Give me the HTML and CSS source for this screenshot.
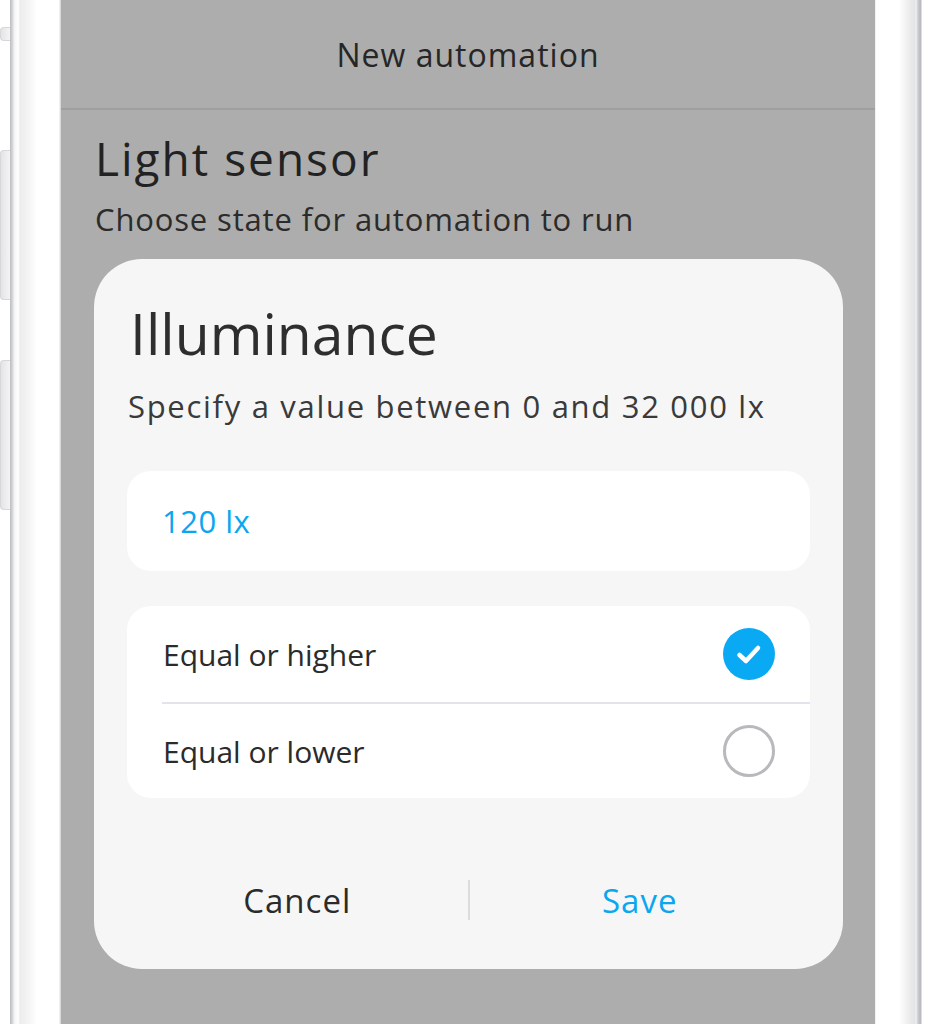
FILE: index.html
```html
<!DOCTYPE html>
<html lang="en">
<head>
<meta charset="utf-8">
<title>New automation</title>
<link rel="stylesheet" href="styles.css">
</head>
<body>
<div class="device">
  <div class="side-buttons">
    <span class="side-btn btn-a"></span>
    <span class="side-btn btn-b"></span>
    <span class="side-btn btn-c"></span>
  </div>
  <div class="bezel bezel-left"></div>
  <main class="screen">
    <header class="topbar">New automation</header>
    <section class="page-head">
      <h1 class="page-title">Light sensor</h1>
      <p class="page-sub">Choose state for automation to run</p>
    </section>
    <div class="dialog">
      <h2 class="dialog-title">Illuminance</h2>
      <p class="dialog-sub">Specify a value between 0 and 32&nbsp;000 lx</p>
      <div class="input-box">120 lx</div>
      <div class="options">
        <div class="option">
          <span class="option-label">Equal or higher</span>
          <span class="radio radio-on">
            <svg width="52" height="52" viewBox="0 0 52 52"><circle cx="26" cy="26" r="26" fill="#0aa9f4"/><path d="M16.5 27 L23 33 L35 20" fill="none" stroke="#fff" stroke-width="4.5" stroke-linecap="round" stroke-linejoin="round"/></svg>
          </span>
        </div>
        <div class="option">
          <span class="option-label">Equal or lower</span>
          <span class="radio radio-off"></span>
        </div>
      </div>
      <div class="actions">
        <span class="action action-cancel">Cancel</span>
        <span class="action-sep"></span>
        <span class="action action-save">Save</span>
      </div>
    </div>
  </main>
  <div class="bezel bezel-right"></div>
</div>
</body>
</html>
```
FILE: styles.css
```css
* { box-sizing: border-box; }
html, body { margin: 0; padding: 0; }
body {
  width: 926px;
  height: 1024px;
  overflow: hidden;
  background: #ffffff;
  font-family: "Open Sans", "Noto Sans", sans-serif;
}
.device {
  display: flex;
  height: 1024px;
}
.side-buttons {
  width: 10px;
  display: flex;
  flex-direction: column;
  flex-shrink: 0;
}
.side-btn {
  display: block;
  width: 10px;
  background: linear-gradient(90deg, #e4e4e6, #f4f4f5);
  border: 1px solid #d6d7d9;
  border-right: none;
  border-radius: 4px 0 0 4px;
}
.btn-a { margin-top: 27px; height: 14px; }
.btn-b { margin-top: 109px; height: 150px; }
.btn-c { margin-top: 60px; height: 150px; }
.bezel-left {
  width: 51px;
  flex-shrink: 0;
  background: linear-gradient(90deg,
    #b9bbbe 0px, #c6c7ca 1px, #dadbdc 3px, #f2f2f3 4px, #ffffff 8px,
    #ececed 10px, #f6f6f6 20px, #ffffff 27px, #ffffff 49px, #e2e2e2 50px, #cfcfcf 51px);
}
.bezel-right {
  width: 47px;
  flex-shrink: 0;
  background: linear-gradient(90deg,
    #e6e6e6 0px, #ffffff 1px, #ffffff 24px, #f0f0f1 32px, #e2e3e5 40px,
    #f3f3f4 41px, #dcdddf 42px, #c0c2c5 44px, #b8babd 46px, #ffffff 47px);
}
.screen {
  width: 814px;
  flex-shrink: 0;
  background: #adadad;
  display: flex;
  flex-direction: column;
}
.topbar {
  height: 110px;
  border-bottom: 2px solid #9f9f9f;
  display: flex;
  align-items: center;
  justify-content: center;
  padding-top: 1px;
  font-size: 32px;
  color: #262626;
  letter-spacing: 1px;
}
.page-head {
  padding: 19px 0 0 34px;
}
.page-title {
  margin: 0;
  font-weight: 400;
  font-size: 46px;
  line-height: 58px;
  letter-spacing: 2px;
  color: #222222;
}
.page-sub {
  margin: 12px 0 0;
  font-size: 31px;
  line-height: 40px;
  letter-spacing: 0.85px;
  color: #2b2b2b;
}
.dialog {
  margin: 20px 0 0 33px;
  width: 749px;
  height: 710px;
  background: #f6f6f6;
  border-radius: 48px;
  padding: 38px 33px 0;
  display: flex;
  flex-direction: column;
}
.dialog-title {
  margin: 0 0 0 3px;
  font-weight: 400;
  font-size: 57px;
  line-height: 72px;
  color: #2e2e2e;
}
.dialog-sub {
  margin: 17px 0 0 1px;
  font-size: 31px;
  line-height: 40px;
  letter-spacing: 1.7px;
  color: #3a3a3a;
}
.input-box {
  margin-top: 45px;
  height: 100px;
  background: #ffffff;
  border-radius: 24px;
  display: flex;
  align-items: center;
  padding-left: 35px;
  font-size: 31px;
  letter-spacing: 0.5px;
  color: #0aa6f0;
}
.options {
  margin-top: 35px;
  background: #ffffff;
  border-radius: 24px;
  display: flex;
  flex-direction: column;
}
.option {
  height: 96px;
  display: flex;
  align-items: center;
  justify-content: space-between;
  padding: 0 35px 0 36px;
}
.option + .option {
  border-top: 2px solid #e3e3ea;
  margin-left: 35px;
  padding-left: 1px;
  height: 96px;
}
.option-label {
  font-size: 30px;
  color: #2b2b2b;
}
.radio {
  width: 52px;
  height: 52px;
  display: block;
  border-radius: 50%;
}
.radio svg { display: block; }
.radio-off {
  border: 3px solid #b8b9bd;
}
.actions {
  margin-top: 51px;
  height: 102px;
  display: flex;
  align-items: center;
}
.action {
  flex: 1;
  text-align: center;
  font-size: 33px;
  letter-spacing: 1px;
}
.action-cancel { color: #2b2b2b; }
.action-save { color: #0aa6f0; }
.action-sep {
  width: 2px;
  height: 40px;
  background: #dcdcdc;
}
```
